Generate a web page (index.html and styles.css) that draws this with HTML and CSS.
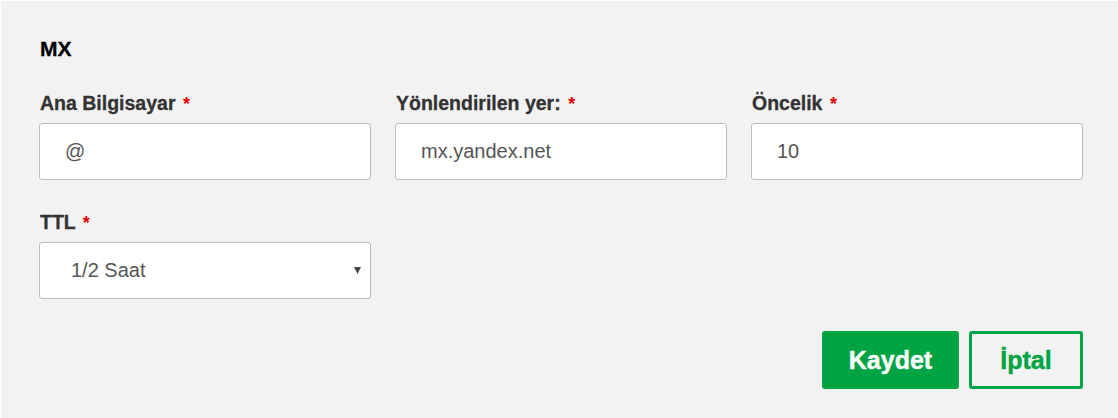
FILE: index.html
```html
<!DOCTYPE html>
<html lang="tr">
<head>
<meta charset="utf-8">
<title>MX</title>
<link rel="stylesheet" href="styles.css">
</head>
<body>
<div class="panel">
  <h2 class="title">MX</h2>
  <div class="grid">
    <div class="field">
      <label class="label">Ana Bilgisayar <span class="req">*</span></label>
      <div class="input">@</div>
    </div>
    <div class="field">
      <label class="label">Yönlendirilen yer: <span class="req">*</span></label>
      <div class="input">mx.yandex.net</div>
    </div>
    <div class="field">
      <label class="label">Öncelik <span class="req">*</span></label>
      <div class="input">10</div>
    </div>
    <div class="field">
      <label class="label">TTL <span class="req">*</span></label>
      <div class="input select"><span class="sel-text">1/2 Saat</span><svg class="arrow" width="7" height="7" viewBox="0 0 7 7"><path d="M0 0H7L3.5 7Z" fill="#444"/></svg></div>
    </div>
  </div>
  <div class="actions">
    <button class="btn btn-primary">Kaydet</button>
    <button class="btn btn-outline">İptal</button>
  </div>
</div>
</body>
</html>
```

FILE: styles.css
```css
html, body {
  margin: 0;
  padding: 0;
  background: #ffffff;
}
body {
  font-family: "Liberation Sans", Arial, sans-serif;
  height: 418px;
  overflow: hidden;
}
.panel {
  margin: 1px 0 0 1px;
  background: #f2f2f2;
  height: 417px;
  box-sizing: border-box;
  padding: 36px 35px 0 38px;
}
.title {
  margin: 0 0 0 1px;
  font-size: 21px;
  line-height: 24px;
  font-weight: bold;
  color: #000;
  -webkit-text-stroke: 0.3px #000;
}
.grid {
  margin-top: 31px;
  display: grid;
  grid-template-columns: 332px 332px 332px;
  column-gap: 24px;
  row-gap: 31px;
}
.field {
  display: flex;
  flex-direction: column;
}
.label {
  font-size: 19.5px;
  font-weight: bold;
  color: #333;
  line-height: 22px;
  margin: 0 0 8px 1px;
  -webkit-text-stroke: 0.3px #333;
}
.req {
  color: #e00000;
  margin-left: 2px;
  -webkit-text-stroke: 0;
  font-size: 18px;
}
.input {
  height: 57px;
  box-sizing: border-box;
  border: 1px solid #bdbdbd;
  border-radius: 3px;
  background: #fff;
  font-size: 20px;
  color: #555;
  padding: 0 25px;
  display: flex;
  align-items: center;
}
.select {
  padding: 0 9px 0 31px;
  justify-content: space-between;
}
.arrow {
  display: block;
}
.actions {
  display: flex;
  justify-content: flex-end;
  gap: 10px;
  margin-top: 32px;
}
.btn {
  font-family: "Liberation Sans", Arial, sans-serif;
  font-weight: bold;
  font-size: 25px;
  height: 58px;
  border-radius: 3px;
  box-sizing: border-box;
  cursor: pointer;
  padding: 0;
}
.btn-primary {
  width: 137px;
  background: #00a443;
  border: none;
  color: #fff;
  -webkit-text-stroke: 0.4px #fff;
}
.btn-outline {
  width: 114px;
  background: transparent;
  border: 3px solid #00a443;
  color: #00a443;
  -webkit-text-stroke: 0.4px #00a443;
}
```
